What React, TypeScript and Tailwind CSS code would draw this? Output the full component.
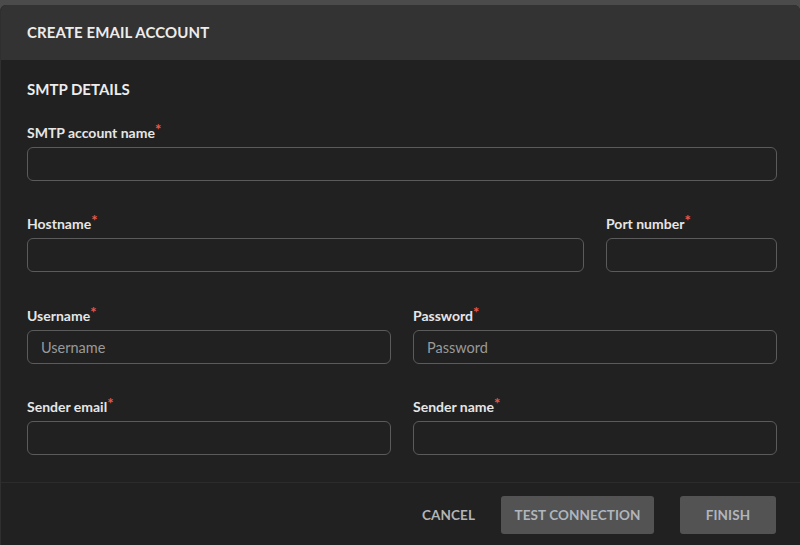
import React from 'react'

const font = { fontFamily: 'Lato, "Noto Sans", sans-serif' }

function Label({ text }: { text: string }) {
  return (
    <label className="block h-[18px] text-[14px] font-bold leading-[22px] text-[#e6e6e6] mb-[7px]">
      {text}
      <span className="relative -top-[3px] text-[15px] leading-none text-[#e8594c]">*</span>
    </label>
  )
}

function Field({ label, placeholder, className }: { label: string; placeholder?: string; className?: string }) {
  return (
    <div className={className}>
      <Label text={label} />
      <input
        type="text"
        placeholder={placeholder}
        className="block h-[34px] w-full rounded-[6px] border border-[#5b5b5b] bg-[#212121] px-[13px] text-[14.5px] text-[#ddd] placeholder:text-[#9a9a9a] outline-none"
        style={font}
      />
    </div>
  )
}

export default function App() {
  return (
    <div className="h-[545px] overflow-hidden bg-[#4b4b4b] pt-[5px]" style={font}>
      <div className="flex h-[540px] flex-col overflow-hidden rounded-t-[6px] border-l border-[#2f2f2f] bg-[#212121]">
        {/* Header */}
        <div className="flex h-[55px] shrink-0 items-center bg-[#333333] px-[26px]">
          <h1 className="text-[15px] font-bold tracking-[0.1px] text-[#ececec]">CREATE EMAIL ACCOUNT</h1>
        </div>

        {/* Body */}
        <div className="flex-1 px-[26px] pr-[23px] pt-[19px]">
          <h2 className="h-[20px] text-[15px] font-bold leading-[20px] text-[#ececec]">SMTP DETAILS</h2>

          <div className="mt-[23px]">
            <Field label="SMTP account name" />
          </div>

          <div className="mt-[32px] flex gap-[22px]">
            <Field label="Hostname" className="flex-1" />
            <Field label="Port number" className="w-[171px]" />
          </div>

          <div className="mt-[33px] grid grid-cols-2 gap-[22px]">
            <Field label="Username" placeholder="Username" />
            <Field label="Password" placeholder="Password" />
          </div>

          <div className="mt-[32px] grid grid-cols-2 gap-[22px]">
            <Field label="Sender email" />
            <Field label="Sender name" />
          </div>
        </div>

        {/* Footer */}
        <div className="flex h-[63px] shrink-0 items-start justify-end border-t border-[#2c2c2c] pr-[24px] pt-[13px]">
          <button className="mr-[26px] h-[38px] text-[13.5px] font-bold tracking-[0.1px] text-[#b4b4b4]">CANCEL</button>
          <button className="mr-[26px] h-[38px] w-[153px] rounded-[3px] bg-[#535353] text-[13.5px] font-bold tracking-[0.1px] text-[#b0b6bc]">
            TEST CONNECTION
          </button>
          <button className="h-[38px] w-[96px] rounded-[3px] bg-[#535353] text-[13.5px] font-bold tracking-[0.1px] text-[#b0b6bc]">
            FINISH
          </button>
        </div>
      </div>
    </div>
  )
}
